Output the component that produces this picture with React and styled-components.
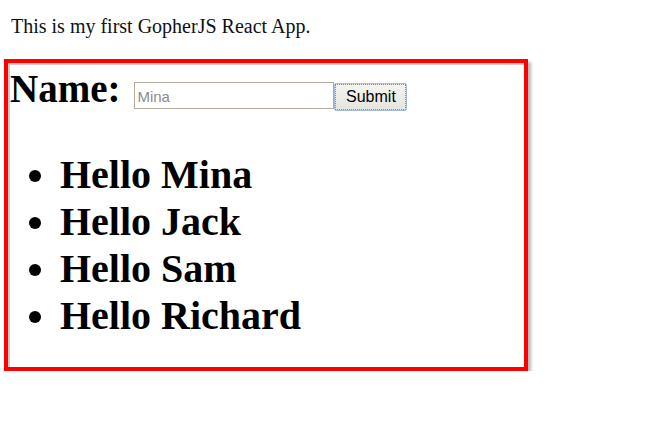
import React from 'react'
import styled, { createGlobalStyle } from 'styled-components'

const GlobalStyle = createGlobalStyle`
  html, body {
    margin: 0;
    padding: 0;
    background: #ffffff;
  }
  body {
    font-family: 'Liberation Serif', 'Times New Roman', serif;
    color: #000000;
  }
`

const Page = styled.div`
  padding: 15px 0 0 4px;
`

const Intro = styled.p`
  margin: 0 0 21px 7px;
  font-size: 20px;
  line-height: 23px;
  color: #111111;
`

const Card = styled.div`
  width: 514px;
  height: 298px;
  border: 4px solid #ff0000;
  box-shadow: 3px 3px 3px #b8b8b8, inset 2px 2px 1px #c4c8cc;
  padding: 6px 0 0 2px;
  box-sizing: content-box;
`

const FormRow = styled.form`
  display: flex;
  align-items: baseline;
  margin: 0;
`

const Label = styled.label`
  font-size: 39px;
  font-weight: bold;
  line-height: 40px;
  margin-right: 14px;
`

const NameInput = styled.input`
  width: 200px;
  height: 27px;
  box-sizing: border-box;
  border: 1px solid #b2aa9e;
  padding: 2px 2px 0;
  font-family: 'Liberation Sans', Arial, sans-serif;
  font-size: 15px;
  color: #808080;
  background: #ffffff;
  outline: none;

  &::placeholder {
    color: #8c8c8c;
  }
`

const SubmitButton = styled.button`
  width: 73px;
  height: 28px;
  box-sizing: border-box;
  border: 1px solid #a6bcd6;
  border-radius: 2px;
  background: linear-gradient(#f4f4f0, #e6e6e0);
  font-family: 'Liberation Sans', Arial, sans-serif;
  font-size: 16px;
  color: #000000;
  padding: 0;
  outline: 1px dotted #6e8cb8;
  outline-offset: -2px;
`

const Greetings = styled.ul`
  margin: 40px 0 0;
  padding-left: 50px;
  list-style: disc;
`

const Greeting = styled.li`
  font-size: 40px;
  font-weight: bold;
  line-height: 47px;
`

const names = ['Mina', 'Jack', 'Sam', 'Richard']

export default function App() {
  return (
    <Page>
      <GlobalStyle />
      <Intro>This is my first GopherJS React App.</Intro>
      <Card>
        <FormRow onSubmit={e => e.preventDefault()}>
          <Label htmlFor="name">Name:</Label>
          <NameInput id="name" placeholder="Mina" />
          <SubmitButton type="submit">Submit</SubmitButton>
        </FormRow>
        <Greetings>
          {names.map(n => (
            <Greeting key={n}>Hello {n}</Greeting>
          ))}
        </Greetings>
      </Card>
    </Page>
  )
}
